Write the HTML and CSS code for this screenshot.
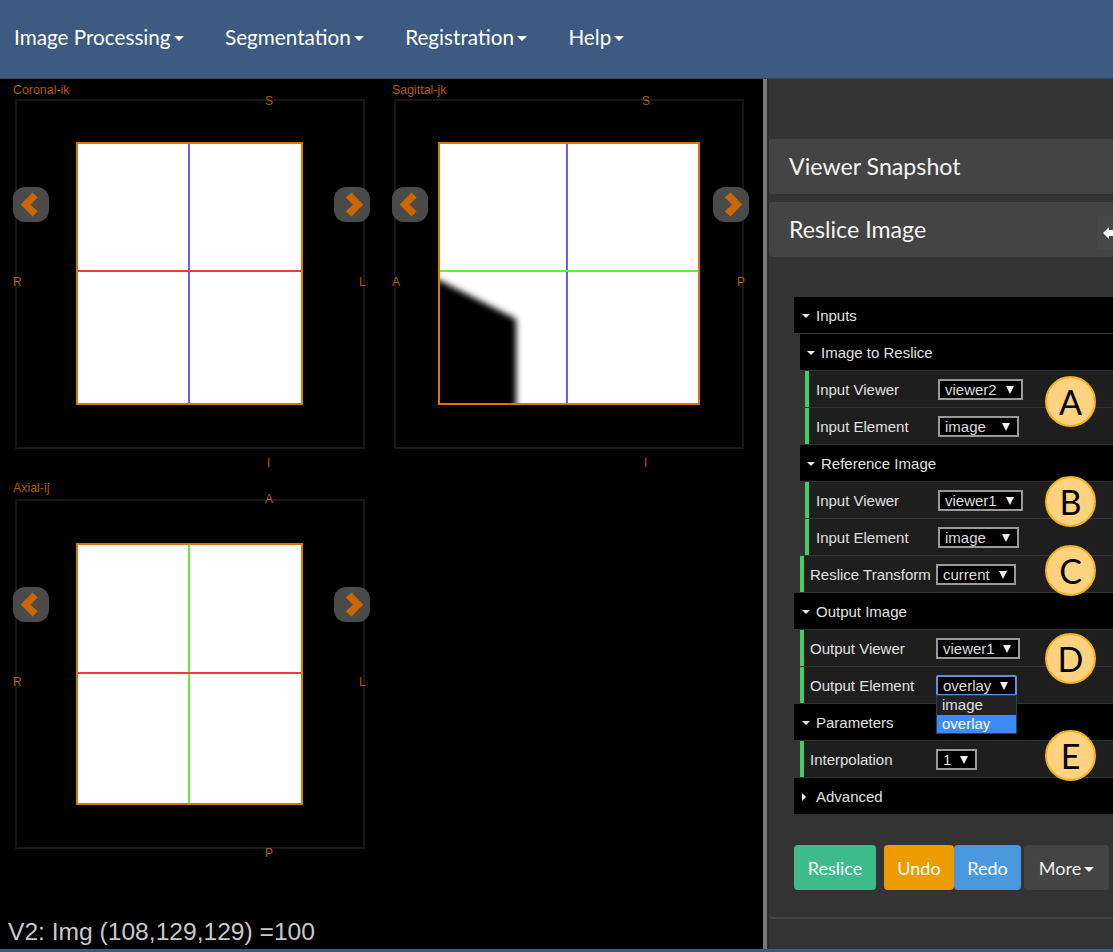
FILE: index.html
```html
<!DOCTYPE html>
<html lang="en">
<head>
<meta charset="utf-8">
<title>Reslice Image</title>
<link rel="stylesheet" href="styles.css">
</head>
<body>
<header class="navbar">
  <a class="nav-item">Image Processing<i class="caret"></i></a>
  <a class="nav-item">Segmentation<i class="caret"></i></a>
  <a class="nav-item">Registration<i class="caret"></i></a>
  <a class="nav-item">Help<i class="caret"></i></a>
</header>
<main class="workspace">
  <section class="viewers">
    <div class="viewer">
      <span class="vname">Coronal-ik</span>
      <div class="frame">
        <div class="slice coronal">
          <i class="line v blue"></i><i class="line h red"></i>
        </div>
      </div>
      <span class="ori top">S</span><span class="ori bottom">I</span><span class="ori left">R</span><span class="ori right">L</span>
      <button class="nav prev"><svg viewBox="0 0 36 35"><path d="M7.7 17.5 19.5 5.5l5.2 5-7.2 7 7.2 7-5.2 5z"/></svg></button>
      <button class="nav next"><svg viewBox="0 0 36 35"><path d="M29.3 17.5 17.5 5.5l-5.8 5 7.3 7-7.3 7 5.8 5z"/></svg></button>
    </div>
    <div class="viewer sag">
      <span class="vname">Sagittal-jk</span>
      <div class="frame">
        <div class="slice sagittal">
          <svg class="shape" viewBox="0 0 261 262" preserveAspectRatio="none"><defs><filter id="soft"><feGaussianBlur stdDeviation="3.2"/></filter></defs><path filter="url(#soft)" d="M-10 134 0 138 77 177V272H-10Z"/></svg>
          <i class="line v blue"></i><i class="line h green"></i>
        </div>
      </div>
      <span class="ori top">S</span><span class="ori bottom">I</span><span class="ori left">A</span><span class="ori right">P</span>
      <button class="nav prev"><svg viewBox="0 0 36 35"><path d="M7.7 17.5 19.5 5.5l5.2 5-7.2 7 7.2 7-5.2 5z"/></svg></button>
      <button class="nav next"><svg viewBox="0 0 36 35"><path d="M29.3 17.5 17.5 5.5l-5.8 5 7.3 7-7.3 7 5.8 5z"/></svg></button>
    </div>
    <div class="viewer ax">
      <span class="vname">Axial-ij</span>
      <div class="frame">
        <div class="slice axial">
          <i class="line v green"></i><i class="line h red"></i>
        </div>
      </div>
      <span class="ori top">A</span><span class="ori bottom">P</span><span class="ori left">R</span><span class="ori right">L</span>
      <button class="nav prev"><svg viewBox="0 0 36 35"><path d="M7.7 17.5 19.5 5.5l5.2 5-7.2 7 7.2 7-5.2 5z"/></svg></button>
      <button class="nav next"><svg viewBox="0 0 36 35"><path d="M29.3 17.5 17.5 5.5l-5.8 5 7.3 7-7.3 7 5.8 5z"/></svg></button>
    </div>
    <p class="status">V2: Img (108,129,129) =100</p>
  </section>
  <div class="splitter"></div>
  <aside class="sidebar">
    <div class="panel-head">Viewer Snapshot</div>
    <div class="panel-head second">Reslice Image
      <span class="grip"><svg viewBox="0 0 16 34"><path d="M6 17l6-6v3h4v6h-4v3z"/></svg></span>
    </div>
    <div class="panel-body">
      <div class="tree">
        <div class="row group l0"><i class="tri"></i>Inputs</div>
        <div class="row group l1"><i class="tri"></i>Image to Reslice</div>
        <div class="row prop l2"><label>Input Viewer</label><span class="select s85">viewer2<i></i></span></div>
        <div class="row prop l2"><label>Input Element</label><span class="select s81">image<i></i></span></div>
        <div class="row group l1"><i class="tri"></i>Reference Image</div>
        <div class="row prop l2"><label>Input Viewer</label><span class="select s85">viewer1<i></i></span></div>
        <div class="row prop l2"><label>Input Element</label><span class="select s81">image<i></i></span></div>
        <div class="row prop l1"><label>Reslice Transform</label><span class="select s80">current<i></i></span></div>
        <div class="row group l0"><i class="tri"></i>Output Image</div>
        <div class="row prop l1"><label>Output Viewer</label><span class="select s84">viewer1<i></i></span></div>
        <div class="row prop l1"><label>Output Element</label><span class="select s81 focus">overlay<i></i></span></div>
        <div class="row group l0"><i class="tri"></i>Parameters</div>
        <div class="row prop l1"><label>Interpolation</label><span class="select s41">1<i></i></span></div>
        <div class="row group l0"><i class="tri closed"></i>Advanced</div>
        <ul class="options"><li>image</li><li class="on">overlay</li></ul>
        <b class="badge a">A</b><b class="badge b">B</b><b class="badge c">C</b><b class="badge d">D</b><b class="badge e">E</b>
      </div>
      <div class="actions">
        <button class="btn green">Reslice</button>
        <div class="pair"><button class="btn orange">Undo</button><button class="btn blue">Redo</button></div>
        <button class="btn dark">More<i class="caret"></i></button>
      </div>
    </div>
  </aside>
</main>
<footer class="strip"></footer>
</body>
</html>
```
FILE: styles.css
```css
* { box-sizing: border-box; }
html, body { margin: 0; height: 100%; overflow: hidden; }
body { width: 1113px; height: 952px; display: flex; flex-direction: column; background: #000; font-family: "Liberation Sans", Arial, sans-serif; }
i { display: block; }

.navbar { height: 79px; flex: none; background: #3d5a80; border-bottom: 1px solid #2f4866; display: flex; align-items: center; gap: 41.4px; padding: 0 0 4px 14px; font-family: Lato, sans-serif; font-size: 20.7px; color: #fff; }
.nav-item { display: flex; align-items: center; }
.caret { width: 0; height: 0; margin-left: 3px; margin-top: 3px; border: 5px solid transparent; border-top-color: currentColor; border-bottom: 0; }

.workspace { flex: 1; min-height: 0; display: flex; }
.viewers { width: 763px; flex: none; position: relative; display: grid; grid-template-columns: 379px 379px; grid-template-rows: 400px 400px; align-content: start; background: #000; }
.viewer { position: relative; padding: 20px 14px 30px 15px; }
.frame { width: 350px; height: 350px; padding: 0 1px 1px 0; border: 2px solid #171717; display: flex; align-items: center; justify-content: center; }
.slice { position: relative; height: 263px; border: 2px solid #d97706; background: #fff; overflow: hidden; }
.coronal, .axial { width: 227px; }
.sagittal { width: 262px; }
.axial { height: 262px; margin-top: 1px; }
.shape { position: absolute; inset: 0; width: 100%; height: 100%; }
.line { position: absolute; }
.line.v { top: 0; bottom: 0; width: 2px; left: 110px; }
.line.h { left: 0; right: 0; height: 2px; top: 126px; }
.sagittal .line.v { left: 126px; }
.axial .line.h { top: 127px; }
.blue { background: #6a5cff; }
.red { background: #ee3a3a; }
.green { background: #66ee33; }
.vname, .ori { position: absolute; color: #b05c00; font-size: 12px; line-height: 14px; }
.vname { left: 13px; top: 4px; font-size: 12.4px; }
.ori.top { left: 265px; top: 15px; }
.ori.bottom { left: 267px; top: 377px; }
.ori.left { left: 13px; top: 196px; }
.ori.right { left: 359px; top: 196px; }
.sag .ori.top, .sag .ori.bottom { margin-left: -2px; }
.sag .ori.right { left: 358px; }
.ax .vname { top: 2px; }
.ax .ori.top { left: 265px; top: 13px; }
.ax .ori.bottom { left: 265px; top: 367px; }
.nav { position: absolute; top: 108px; width: 36px; height: 35px; padding: 0; border: 0; border-radius: 12px; background: #4a4a4a; }
.nav.prev { left: 13px; }
.nav.next { left: 334px; }
.nav svg { display: block; width: 36px; height: 35px; fill: #cc6600; }
.status { position: absolute; left: 8px; top: 838px; margin: 0; font-size: 24.6px; line-height: 30px; color: #c8c8c8; }

.splitter { width: 6px; flex: none; background: #2b2b2b; border-left: 4px solid #777; }
.sidebar { flex: 1; min-width: 0; background: #333; padding-top: 60px; }
.panel-head { position: relative; height: 55px; background: #444; font-family: Lato, sans-serif; font-size: 23.2px; color: #f4f4f4; line-height: 55px; padding-left: 20px; border-radius: 4px 0 0 4px; }
.panel-head.second { margin-top: 8px; }
.grip { position: absolute; right: 0; top: 14px; width: 16px; height: 34px; background: #484848; display: block; }
.grip svg { display: block; width: 16px; height: 34px; fill: #fff; }
.panel-body { height: 662px; padding: 40px 0 0 25px; border-bottom: 2px solid #444; border-radius: 0 0 0 4px; }
.tree { position: relative; display: grid; grid-auto-rows: 36px; row-gap: 1px; color: #e0e0e0; font-size: 15px; }
.row { display: flex; align-items: center; padding-top: 1px; }
.l1 { margin-left: 6px; }
.l2 { margin-left: 11px; }
.group { background: #000; padding-left: 8px; }
.group.l1 { padding-left: 7px; }
.tri { width: 0; height: 0; margin-right: 6px; border: 4px solid transparent; border-top: 4px solid #eee; border-bottom: 0; }
.tri.closed { border: 4px solid transparent; border-left: 4px solid #eee; border-right: 0; margin-right: 10px; }
.prop { background: #1e1e1e; border-left: 4px solid #44cc66; padding-left: 6px; }
.prop label { width: 126px; flex: none; white-space: nowrap; }
.prop.l2 { padding-left: 7px; }
.l2 .select { margin-left: -4px; }
.select { position: relative; height: 21px; display: block; background: #000; border: 2px solid #999; padding-left: 5px; line-height: 17px; color: #dcdcdc; }
.select i { position: absolute; right: 7px; top: 5px; width: 0; height: 0; border: 4.5px solid transparent; border-top: 8px solid #eee; border-bottom: 0; }
.s85 { width: 85px; }
.s84 { width: 84px; }
.s81 { width: 81px; }
.s80 { width: 80px; }
.s41 { width: 41px; }
.select.focus { border-color: #5b8fdc; border-radius: 2px; }
.options { position: absolute; left: 142px; top: 398px; width: 81px; margin: 0; padding: 0; list-style: none; background: #222; border: 1px solid #26415f; line-height: 18.5px; }
.options li { padding-left: 5px; }
.options .on { background: #3d8bf5; color: #fff; }
.badge { position: absolute; left: 251px; width: 51px; height: 51px; border-radius: 50%; background: #ffd27f; border: 2px solid #f2b01e; color: #000; font: 400 34px/47px Lato, sans-serif; text-align: center; }
.badge.a { top: 79px; }
.badge.b { top: 179px; }
.badge.c { top: 248px; }
.badge.d { top: 336px; }
.badge.e { top: 433px; }

.actions { display: flex; margin-top: 31px; height: 45px; }
.btn { height: 45px; padding: 0; border: 0; border-radius: 4px; color: #fff; font: 400 18px Lato, sans-serif; display: flex; align-items: center; justify-content: center; }
.btn.green { width: 82px; background: #3dbb8a; }
.pair { display: flex; margin-left: 8px; }
.btn.orange { width: 70px; background: #ee9b00; }
.btn.blue { width: 67px; background: #4a98de; }
.btn.dark { width: 85px; margin-left: 3px; background: #444; color: #eee; }
.strip { height: 3px; flex: none; background: #3d5a80; }
```
